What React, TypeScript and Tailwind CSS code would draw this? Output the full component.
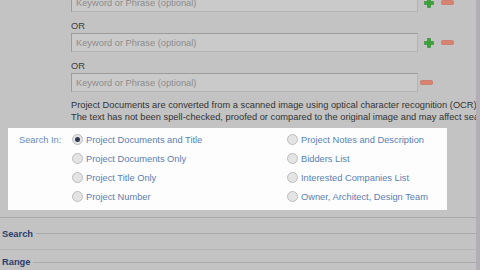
import React from "react";

function Plus() {
  return (
    <svg width="10" height="10" viewBox="0 0 10 10" className="shrink-0">
      <path d="M3.5 0.5h3v3h3v3h-3v3h-3v-3h-3v-3h3z" fill="#3aa43a" stroke="#2d8a2d" strokeWidth="0.6" />
    </svg>
  );
}

function Minus() {
  return (
    <svg width="13" height="5" viewBox="0 0 13 5" className="shrink-0">
      <rect x="0.5" y="0.5" width="12" height="4" rx="1" fill="#d9826f" stroke="#c96a58" strokeWidth="0.6" />
    </svg>
  );
}

function Input({ plus }: { plus: boolean }) {
  return (
    <div className="flex items-center">
      <div className="w-[347px] h-[19px] shrink-0 border border-t-[#9c9c9c] border-l-[#9c9c9c] border-r-[#b4b4b4] border-b-[#b4b4b4] bg-[#cacaca] flex items-center pl-[4px] text-[#8c8c8c]">
        Keyword or Phrase (optional)
      </div>
      {plus ? (
        <div className="flex items-center ml-[6px] gap-[7px]">
          <Plus />
          <Minus />
        </div>
      ) : (
        <div className="flex items-center ml-[2px]">
          <Minus />
        </div>
      )}
    </div>
  );
}

function Radio({ checked, label }: { checked?: boolean; label: string }) {
  return (
    <div className="h-[19px] flex items-center">
      <div className="w-[11px] h-[11px] rounded-full border border-[#bdbdbd] bg-[#e4e4e4] flex items-center justify-center shrink-0">
        {checked && <div className="w-[5px] h-[5px] rounded-full bg-[#2f3a55]" />}
      </div>
      <span className="ml-[3px] text-[#5a7db3]">{label}</span>
    </div>
  );
}

export default function App() {
  return (
    <div
      className="w-[480px] h-[270px] overflow-hidden bg-[#c3c3c3] text-[9.3px] leading-[12px] flex"
      style={{ fontFamily: '"Liberation Sans", Arial, sans-serif' }}
    >
      <div className="flex-1 min-w-0">
        <div className="pl-[71px] mt-[-7px]">
          <Input plus />
          <div className="h-[21px] flex items-end pb-[1px] text-[#3c3c3c]">OR</div>
          <Input plus />
          <div className="h-[21px] flex items-end pb-[1px] text-[#3c3c3c]">OR</div>
          <Input plus={false} />
          <div className="mt-[7px] text-[#333333] whitespace-nowrap">
            <div>Project Documents are converted from a scanned image using optical character recognition (OCR).</div>
            <div>The text has not been spell-checked, proofed or compared to the original image and may affect search results.</div>
          </div>
        </div>
        <div className="ml-[8px] mt-[5px] w-[439px] h-[82px] bg-[#fdfdfd] flex pl-[11px] pt-[2px]">
          <div className="w-[53px] h-[19px] flex items-center text-[#6b89b8]">Search In:</div>
          <div className="w-[215px] flex flex-col">
            <Radio checked label="Project Documents and Title" />
            <Radio label="Project Documents Only" />
            <Radio label="Project Title Only" />
            <Radio label="Project Number" />
          </div>
          <div className="flex flex-col">
            <Radio label="Project Notes and Description" />
            <Radio label="Bidders List" />
            <Radio label="Interested Companies List" />
            <Radio label="Owner, Architect, Design Team" />
          </div>
        </div>
        <div className="h-[8px] border-b border-[#a9a9a9]" />
        <div className="h-[31px] flex items-center pl-[2px] gap-[3px]">
          <span className="font-bold text-[#2c3d6c]">Search</span>
          <div className="flex-1 h-px bg-[#ababab]" />
        </div>
        <div className="h-px bg-[#b7b7b7]" />
        <div className="h-[24px] flex items-center pl-[2px] gap-[3px]">
          <span className="font-bold text-[#2c3d6c]">Range</span>
          <div className="flex-1 h-px bg-[#ababab]" />
        </div>
      </div>
      <div className="w-[4px] shrink-0 bg-[#b3aeb6]" />
    </div>
  );
}
